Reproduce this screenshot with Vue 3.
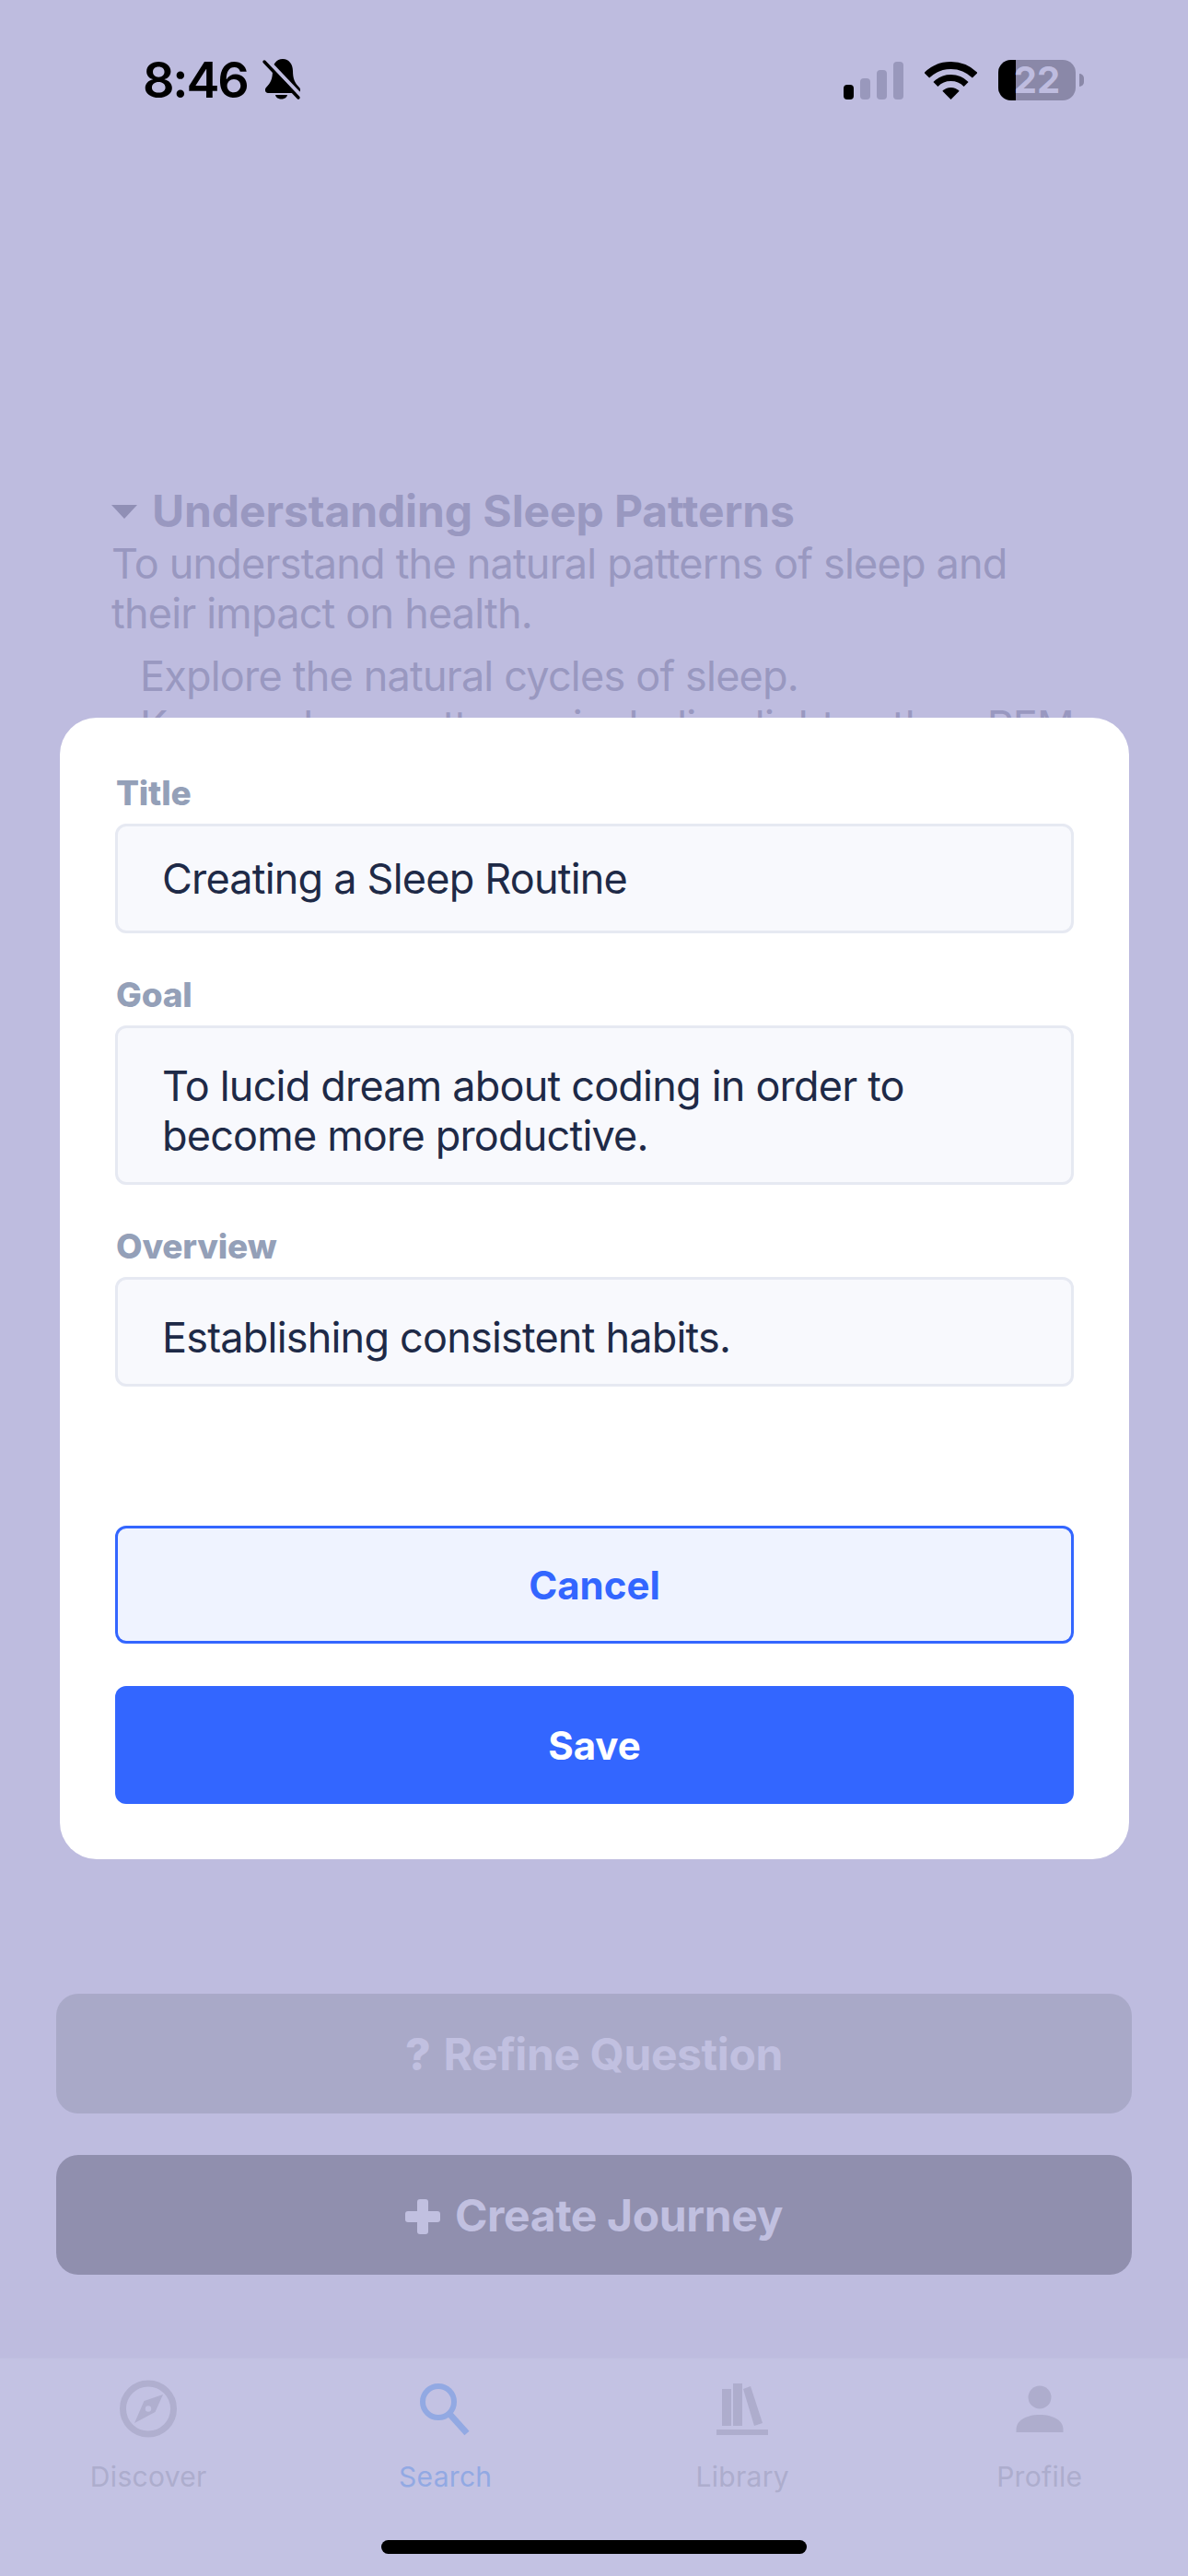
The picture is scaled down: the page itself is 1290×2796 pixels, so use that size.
<script setup>
const fields = [
  { label: 'Title', value: 'Creating a Sleep Routine', multiline: false },
  { label: 'Goal', value: 'To lucid dream about coding in order to become more productive.', multiline: true },
  { label: 'Overview', value: 'Establishing consistent habits.', multiline: true }
]

const tabs = ['Discover', 'Search', 'Library', 'Profile']
</script>

<template>
  <div class="screen">
    <!-- status bar -->
    <header class="status-bar">
      <div class="status-left">
        <span class="time">8:46</span>
        <svg class="bell" width="48" height="46" viewBox="0 0 48 46">
          <path d="M24 0C17 0 13 6 13 13C13 21 11 26 6 31C4 33 5 37 8 37H40C43 37 44 33 42 31C37 26 35 21 35 13C35 6 31 0 24 0Z" fill="#000" />
          <path d="M16 39C17 45 28 45 29 39Z" fill="#000" />
          <path d="M7 1L47 43" stroke="#bebcdf" stroke-width="4" />
          <path d="M4 3L41 42" stroke="#000" stroke-width="3.4" stroke-linecap="round" />
        </svg>
      </div>
      <div class="status-right">
        <div class="signal">
          <span class="bar bar-1"></span>
          <span class="bar bar-2"></span>
          <span class="bar bar-3"></span>
          <span class="bar bar-4"></span>
        </div>
        <svg width="57" height="43" viewBox="0 0 57 43">
          <path d="M2.3 15.8A37 37 0 0 1 54.7 15.8" fill="none" stroke="#000" stroke-width="8" />
          <path d="M11.9 25.4A23.5 23.5 0 0 1 45.1 25.4" fill="none" stroke="#000" stroke-width="7" />
          <path d="M28.5 42L19.3 32.8A13 13 0 0 1 37.7 32.8Z" fill="#000" />
        </svg>
        <div class="battery">
          <div class="battery-body">
            <span class="battery-fill"></span>
            <span class="battery-level">22</span>
          </div>
          <span class="battery-nub"></span>
        </div>
      </div>
    </header>

    <!-- content behind the sheet -->
    <main class="journey">
      <h2 class="journey-title"><span class="caret"></span>Understanding Sleep Patterns</h2>
      <p class="journey-goal">To understand the natural patterns of sleep and their impact on health.</p>
      <ul class="journey-steps">
        <li>Explore the natural cycles of sleep.</li>
        <li>Known sleep patterns, including lighter, then REM</li>
      </ul>
    </main>

    <div class="actions">
      <button class="action action-refine"><span class="action-glyph">?</span> Refine Question</button>
      <button class="action action-create"><span class="plus"></span> Create Journey</button>
    </div>

    <!-- tab bar -->
    <nav class="tab-bar">
      <div v-for="tab in tabs" :key="tab" class="tab" :class="{ active: tab === 'Search' }">
        <svg class="tab-icon" width="80" height="80" viewBox="0 0 80 80">
          <g v-if="tab === 'Discover'">
            <circle cx="40" cy="39.5" r="27.5" fill="none" stroke="#b0afcf" stroke-width="7" />
            <path d="M56 24L47.5 43L25 55L35.5 31Z" fill="#b0afcf" />
            <circle cx="40" cy="39.5" r="3.2" fill="#c3c2e3" />
          </g>
          <g v-else-if="tab === 'Search'">
            <circle cx="32" cy="32" r="17" fill="none" stroke="#92a9e3" stroke-width="6" />
            <path d="M45 46L63 66" stroke="#92a9e3" stroke-width="7" />
          </g>
          <g v-else-if="tab === 'Library'" fill="#aeadcd">
            <rect x="18" y="18" width="10" height="40" />
            <rect x="30" y="12" width="10" height="46" />
            <path d="M41 18L49 15L62 55L53 58Z" />
            <rect x="12" y="62" width="56" height="6" />
          </g>
          <g v-else fill="#aeadcd">
            <ellipse cx="40" cy="27" rx="12.5" ry="12.5" />
            <path d="M14.5 65V62C14.5 52 26 46 40 46C54 46 65.500 52 65.500 62V65Z" />
          </g>
        </svg>
        <span class="tab-label">{{ tab }}</span>
      </div>
    </nav>

    <!-- edit sheet -->
    <section class="overlay">
      <div class="sheet">
        <div v-for="field in fields" :key="field.label" class="field">
          <label class="field-label">{{ field.label }}</label>
          <div class="field-input" :class="{ multiline: field.multiline }">{{ field.value }}</div>
        </div>
        <button class="sheet-btn btn-cancel">Cancel</button>
        <button class="sheet-btn btn-save">Save</button>
      </div>
    </section>

    <div class="home-indicator"></div>
  </div>
</template>

<style>
body {
  margin: 0;
  background: #bebcdf;
}
</style>

<style scoped>
.screen {
  position: relative;
  width: 1290px;
  height: 2796px;
  display: flex;
  flex-direction: column;
  overflow: hidden;
  background: #bebcdf;
  font-family: Inter, "Liberation Sans", sans-serif;
}

.status-bar {
  display: flex;
  justify-content: space-between;
  align-items: center;
  height: 46px;
  padding: 64px 113px 0 155px;
}

.status-left {
  display: flex;
  align-items: center;
  gap: 14px;
}

.time {
  font-size: 54px;
  font-weight: 600;
  letter-spacing: -2.2px;
  line-height: 46px;
  color: #000;
}

.status-right {
  display: flex;
  align-items: center;
  gap: 23px;
}

.signal {
  display: flex;
  align-items: flex-end;
  gap: 7px;
  height: 41px;
}

.bar {
  width: 11px;
  border-radius: 4px;
  background: #9998bc;
}

.bar-1 {
  height: 16px;
  background: #000;
}

.bar-2 {
  height: 23px;
}

.bar-3 {
  height: 32px;
}

.bar-4 {
  height: 41px;
}

.battery {
  display: flex;
  align-items: center;
  gap: 4px;
}

.battery-body {
  position: relative;
  display: flex;
  align-items: center;
  justify-content: center;
  width: 84px;
  height: 44px;
  border-radius: 14px;
  background: #8a88a8;
}

.battery-fill {
  position: absolute;
  left: 0;
  top: 0;
  bottom: 0;
  width: 19px;
  border-radius: 14px 0 0 14px;
  background: #000;
}

.battery-level {
  position: relative;
  font-size: 40px;
  font-weight: 700;
  line-height: 44px;
  color: #bebcdf;
}

.battery-nub {
  width: 5px;
  height: 14px;
  border-radius: 0 6px 6px 0;
  background: #8a88a8;
}

.journey {
  flex: 1;
  padding: 415px 120px 0 121px;
  color: #9998c0;
}

.journey-title {
  display: flex;
  align-items: center;
  margin: 0;
  font-size: 48px;
  font-weight: 700;
  letter-spacing: -0.1px;
  line-height: 60px;
}

.caret {
  width: 0;
  height: 0;
  margin-right: 16px;
  border-left: 14px solid transparent;
  border-right: 14px solid transparent;
  border-top: 15px solid #908fb5;
}

.journey-goal {
  margin: 0;
  font-size: 45px;
  letter-spacing: -0.8px;
  line-height: 54px;
}

.journey-steps {
  margin: 14px 0 0;
  padding: 0 0 0 31px;
  list-style: none;
  font-size: 45px;
  letter-spacing: -0.8px;
  line-height: 54px;
}

.actions {
  display: flex;
  flex-direction: column;
  gap: 45px;
  padding: 0 61px 90px;
}

.action {
  display: block;
  height: 130px;
  border: none;
  border-radius: 24px;
  font-family: inherit;
  font-size: 48px;
  font-weight: 700;
  letter-spacing: -0.4px;
  color: #c1c0e0;
}

.action-refine {
  background: #a9a9c8;
}

.action-create {
  background: #908fae;
}

.action-glyph {
  margin-right: 3px;
  font-weight: 800;
}

.plus {
  display: inline-block;
  position: relative;
  width: 38px;
  height: 38px;
  margin-right: 5px;
  vertical-align: -3px;
}

.plus::before,
.plus::after {
  content: "";
  position: absolute;
  border-radius: 3px;
  background: #c1c0e0;
}

.plus::before {
  left: 13px;
  top: 0;
  width: 12px;
  height: 38px;
}

.plus::after {
  left: 0;
  top: 13px;
  width: 38px;
  height: 12px;
}

.tab-bar {
  display: grid;
  grid-template-columns: repeat(4, 1fr);
  height: 236px;
  border-top: 1px solid #c0bfe0;
  background: #c3c2e3;
}

.tab {
  display: flex;
  flex-direction: column;
  align-items: center;
  padding-top: 15px;
  color: #adadcd;
}

.tab.active {
  color: #92a9e3;
}

.tab-icon {
  display: block;
}

.tab-label {
  margin-top: 15px;
  font-size: 30px;
  letter-spacing: 0.3px;
  line-height: 36px;
}

.overlay {
  position: absolute;
  left: 65px;
  right: 64px;
  top: 779px;
}

.sheet {
  display: flex;
  flex-direction: column;
  padding: 60px 60px 60px;
  border-radius: 40px;
  background: #fff;
}

.field {
  margin-bottom: 45px;
}

.field:last-of-type {
  margin-bottom: 151px;
}

.field-label {
  display: block;
  margin-bottom: 11px;
  margin-left: 1px;
  font-size: 37px;
  font-weight: 800;
  letter-spacing: -0.2px;
  line-height: 44px;
  color: #94a0b8;
}

.field-input {
  box-sizing: border-box;
  min-height: 119px;
  padding: 30px 50px 29px 48px;
  border: 3px solid #e6e9f2;
  border-radius: 12px;
  background: #f8f9fd;
  font-size: 45px;
  letter-spacing: -0.8px;
  line-height: 54px;
  color: #1e2a47;
}

.field-input.multiline {
  padding-top: 36px;
  padding-bottom: 23px;
}

.sheet-btn {
  height: 128px;
  border-radius: 12px;
  font-family: inherit;
  font-size: 42px;
  font-weight: 700;
}

.btn-cancel {
  border: 3px solid #3366ff;
  background: #eff3ff;
  color: #3366ff;
}

.btn-save {
  margin-top: 46px;
  border: none;
  background: #3366ff;
  color: #fff;
}

.home-indicator {
  position: absolute;
  left: 414px;
  top: 2757px;
  width: 462px;
  height: 15px;
  border-radius: 8px;
  background: #000;
}
</style>
